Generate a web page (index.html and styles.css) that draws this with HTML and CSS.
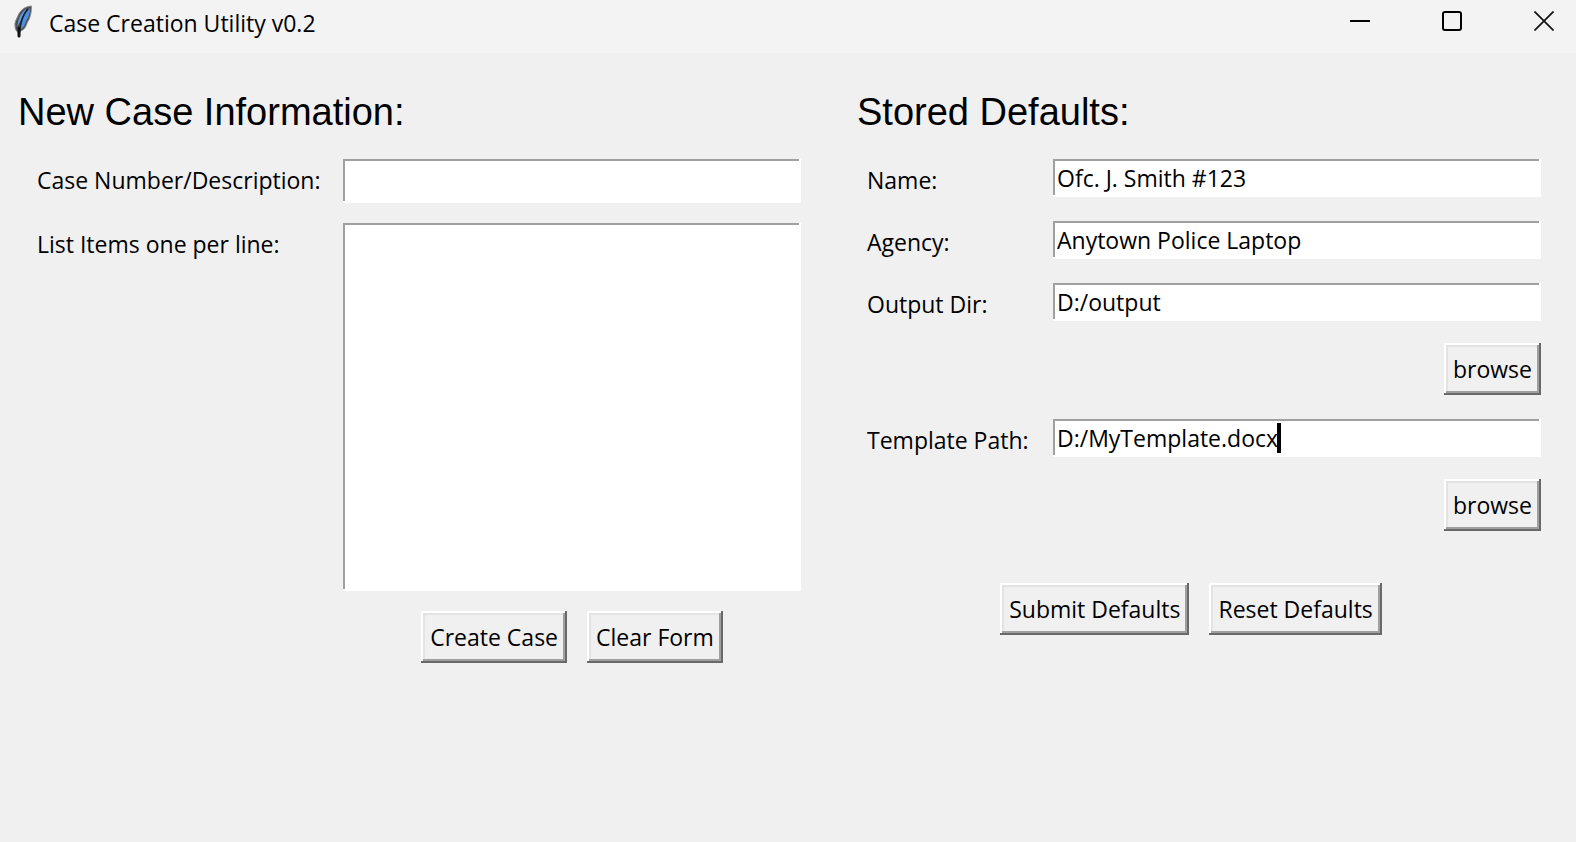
FILE: index.html
```html
<!DOCTYPE html>
<html lang="en">
<head>
<meta charset="utf-8">
<title>Case Creation Utility v0.2</title>
<link rel="stylesheet" href="styles.css">
</head>
<body>
<header class="titlebar">
  <svg class="feather" viewBox="0 0 20 34" width="20" height="34" aria-hidden="true">
    <path d="M18.500 1C11 1.500 6.500 6 4.500 12C3 15 1.500 17 2 21C2 25 4 26.500 5.500 28L7.500 26C11 25 13 22 14.500 17C17 14 18.500 8 18.500 1Z" fill="#4b4f55" stroke="#8d8d8d" stroke-width="1"/>
    <path d="M17 3C13 7 10 11 8 16L7 24.500C10 23.500 12 20 13 16C15.500 13 17 8 17 3Z" fill="#4d8fe0"/>
    <path d="M14 3.500C9 6 7 11 5.500 15L4 22L7 17L10.500 9Z" fill="#5f97d6"/>
    <path d="M15 4C11 8 7 16 6 32" fill="none" stroke="#17212e" stroke-width="1.500"/>
    <path d="M6 23V31" stroke="#111" stroke-width="3" stroke-linecap="round"/>
  </svg>
  <h1 class="title">Case Creation Utility v0.2</h1>
  <div class="window-controls">
    <button class="window-button" type="button" aria-label="Minimize">
      <svg viewBox="0 0 20 20" width="20" height="20"><path d="M0 10H20" stroke="#000" stroke-width="2"/></svg>
    </button>
    <button class="window-button" type="button" aria-label="Maximize">
      <svg viewBox="0 0 20 20" width="20" height="20"><rect x="1" y="1" width="18" height="18" rx="2" fill="none" stroke="#000" stroke-width="2"/></svg>
    </button>
    <button class="window-button" type="button" aria-label="Close">
      <svg viewBox="0 0 20 20" width="20" height="20"><path d="M.5 .5L19.500 19.500M19.500 .5L.5 19.500" stroke="#111" stroke-width="1.700"/></svg>
    </button>
  </div>
</header>
<main class="content">
  <form class="panel">
    <h2 class="heading">New Case Information:</h2>
    <div class="case-fields">
      <label class="label" for="case">Case Number/Description:</label>
      <input class="entry entry-tall" id="case" type="text">
      <label class="label" for="items">List Items one per line:</label>
      <textarea class="entry list" id="items"></textarea>
      <div class="actions case-actions">
        <button class="button" type="button">Create Case</button>
        <button class="button" type="button">Clear Form</button>
      </div>
    </div>
  </form>
  <form class="panel">
    <h2 class="heading">Stored Defaults:</h2>
    <div class="default-fields">
      <div class="row">
        <label class="label" for="name">Name:</label>
        <input class="entry" id="name" type="text" value="Ofc. J. Smith #123">
      </div>
      <div class="row">
        <label class="label" for="agency">Agency:</label>
        <input class="entry" id="agency" type="text" value="Anytown Police Laptop">
      </div>
      <div class="row">
        <label class="label" for="output">Output Dir:</label>
        <input class="entry" id="output" type="text" value="D:/output">
        <button class="button browse" type="button">browse</button>
      </div>
      <div class="row">
        <label class="label" for="template">Template Path:</label>
        <div class="editing">
          <input class="entry" id="template" type="text" value="D:/MyTemplate.docx">
          <span class="caret"></span>
        </div>
        <button class="button browse" type="button">browse</button>
      </div>
    </div>
    <div class="actions default-actions">
      <button class="button" type="button">Submit Defaults</button>
      <button class="button" type="button">Reset Defaults</button>
    </div>
  </form>
</main>
</body>
</html>
```
FILE: styles.css
```css
* { box-sizing: border-box; }

body {
  margin: 0;
  min-height: 100vh;
  background: #f0f0f0;
  color: #000;
  font-family: "Open Sans", "Noto Sans", sans-serif;
  font-size: 23px;
  line-height: 32px;
}

.titlebar {
  display: flex;
  align-items: flex-start;
  height: 53px;
  padding: 5px 0 0 13px;
  background: #f3f3f3;
}

.feather { flex: none; }

.title {
  margin: 2px 0 0 16px;
  font-size: 23px;
  font-weight: 400;
  line-height: 32px;
}

.window-controls {
  display: flex;
  gap: 28px;
  margin-left: auto;
}

.window-button {
  display: flex;
  justify-content: center;
  width: 64px;
  padding: 6px 0;
  border: 0;
  background: none;
}

.content {
  display: grid;
  grid-template-columns: 783fr 684fr;
  gap: 56px;
  padding: 36px 35px 32px 18px;
}

.heading {
  margin: 0 0 24px;
  font-family: "Liberation Sans", Arial, sans-serif;
  font-size: 38px;
  font-weight: 400;
  line-height: 46px;
}

.case-fields {
  display: grid;
  grid-template-columns: 306px 1fr;
  gap: 20px 0;
  padding-left: 19px;
}

.label { padding-top: 5px; }

.entry {
  display: block;
  width: 100%;
  height: 38px;
  padding: 0 4px;
  border: 0;
  border-radius: 0;
  outline: 0;
  background: #fff;
  box-shadow: inset -2px -2px #fff, inset 2px 2px #a0a0a0;
  color: #000;
  font: inherit;
}

.entry-tall { height: 44px; }

.list {
  height: 368px;
  resize: none;
}

.actions {
  display: flex;
  gap: 20px;
}

.case-actions {
  grid-column: 2;
  justify-content: center;
}

.button {
  height: 52px;
  padding: 0 9px;
  border: 0;
  background: #f0f0f0;
  box-shadow: inset -2px -2px #696969, inset 2px 2px #fff, inset -4px -4px #a0a0a0, inset 4px 4px #e3e3e3;
  color: #000;
  font: inherit;
}

.default-fields {
  display: grid;
  gap: 24px;
  padding-left: 10px;
}

.row {
  display: grid;
  grid-template-columns: 186px 1fr;
  row-gap: 22px;
}

.browse {
  grid-column: 2;
  justify-self: end;
}

.editing { position: relative; }

.caret {
  position: absolute;
  top: 4px;
  left: 224px;
  width: 4px;
  height: 30px;
  background: #000;
}

.default-actions {
  justify-content: center;
  margin-top: 52px;
  padding-right: 16px;
}
```
